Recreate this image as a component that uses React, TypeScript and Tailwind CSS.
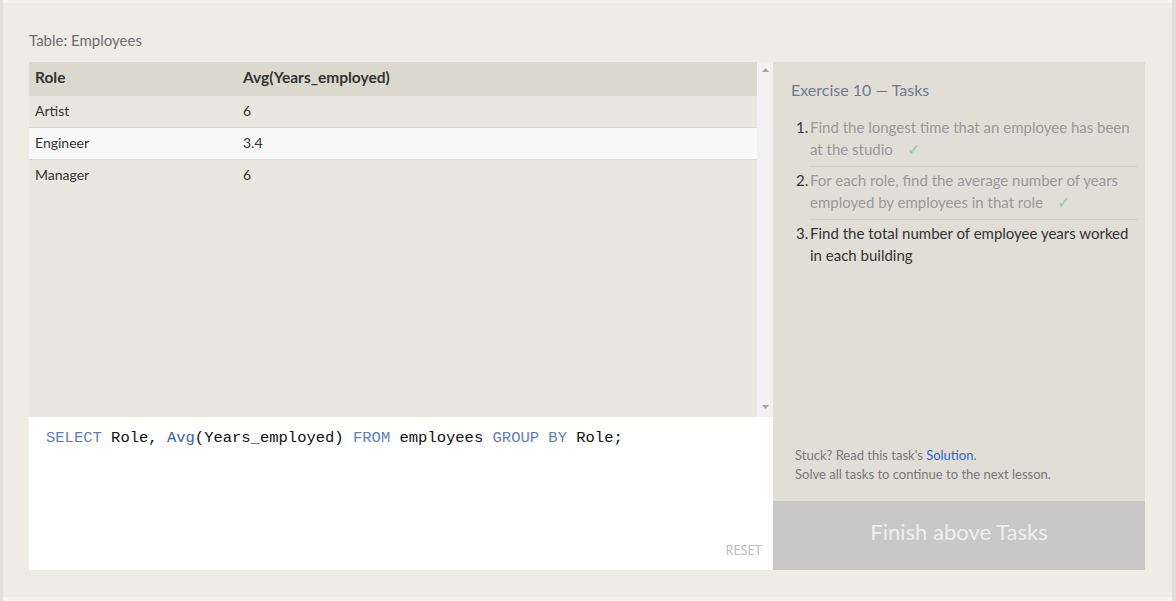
import React from "react";

const Check = () => <span className="ml-[14px] text-[16px] text-[#8fd19e]">✓</span>;

export default function App() {
  return (
    <div className="w-[1176px] h-[601px] bg-[#f6f4ef] flex font-['Lato','Noto_Sans',sans-serif]">
      <div className="w-[3px] h-full bg-[#e2dfdb]" />
      <div className="flex-1 flex flex-col">
        <div className="h-[3px]" />
        <div className="h-[594px] bg-[#efece5] px-[26px] pt-[28px] flex flex-col">
          <div className="text-[15px] leading-[18px] text-[#6e6e6e] mb-[13px]">Table: Employees</div>
          <div className="flex h-[508px]">
            <div className="w-[744px] flex flex-col">
              <div className="h-[355px] flex bg-[#e9e7e0]">
                <div className="flex-1 text-[14px] text-[#333]">
                  <div className="flex h-[34px] items-start pt-[5px] bg-[#dbd9ce] font-bold text-[15.5px] leading-[20px]">
                    <div className="w-[208px] pl-[6px]">Role</div>
                    <div className="pl-[6px]">Avg(Years_employed)</div>
                  </div>
                  <div className="flex h-[32px] items-start pt-[5px] leading-[20px] border-b border-[#dcdbd3]">
                    <div className="w-[208px] pl-[6px]">Artist</div>
                    <div className="pl-[6px]">6</div>
                  </div>
                  <div className="flex h-[32px] items-start pt-[5px] leading-[20px] bg-[#f9f9f9] border-b border-[#dcdbd3]">
                    <div className="w-[208px] pl-[6px]">Engineer</div>
                    <div className="pl-[6px]">3.4</div>
                  </div>
                  <div className="flex h-[31px] items-start pt-[5px] leading-[20px]">
                    <div className="w-[208px] pl-[6px]">Manager</div>
                    <div className="pl-[6px]">6</div>
                  </div>
                </div>
                <div className="w-[16px] bg-[#f1f1f1] flex flex-col items-center justify-between pt-[6px] pb-[8px]">
                  <svg width="7" height="4" viewBox="0 0 7 4"><path d="M3.5 0L7 4H0z" fill="#a3a3a3" /></svg>
                  <svg width="7" height="4" viewBox="0 0 7 4"><path d="M0 0H7L3.5 4z" fill="#a3a3a3" /></svg>
                </div>
              </div>
              <div className="flex-1 bg-white flex flex-col pl-[17px] pr-[11px] pt-[11px] pb-[9px]">
                <div className="font-['Liberation_Mono',monospace] text-[15.5px] leading-[20px] whitespace-pre text-[#111]">
                  <span className="text-[#5b7ec2]">SELECT</span> Role, <span className="text-[#3f5ea8]">Avg</span>(Years_employed) <span className="text-[#5b7ec2]">FROM</span> employees <span className="text-[#5b7ec2]">GROUP BY</span> Role;
                </div>
                <div className="mt-auto self-end text-[12.5px] text-[#bdbdbd]">RESET</div>
              </div>
            </div>
            <div className="w-[372px] flex flex-col">
              <div className="h-[439px] bg-[#e1dfd5] pl-[18px] pr-[7px] pt-[18px] flex flex-col">
                <div className="text-[16px] leading-[20px] text-[#6e7891]">Exercise 10 — Tasks</div>
                <ol className="mt-[16px] text-[15px] leading-[22px]">
                  <li className="flex">
                    <span className="w-[19px] pl-[5px] text-[#333] shrink-0">1.</span>
                    <div className="flex-1 text-[#999] pb-[6px] border-b border-[#d4d2c8]">Find the longest time that an employee has been at the studio<Check /></div>
                  </li>
                  <li className="flex mt-[2px]">
                    <span className="w-[19px] pl-[5px] text-[#333] shrink-0">2.</span>
                    <div className="flex-1 text-[#999] pb-[6px] border-b border-[#d4d2c8]">For each role, find the average number of years employed by employees in that role<Check /></div>
                  </li>
                  <li className="flex mt-[2px]">
                    <span className="w-[19px] pl-[5px] text-[#333] shrink-0">3.</span>
                    <div className="flex-1 text-[#333]">Find the total number of employee years worked in each building</div>
                  </li>
                </ol>
                <div className="mt-auto mb-[17px] pl-[4px] text-[13px] leading-[19px] text-[#777]">
                  <div>Stuck? Read this task's <span className="text-[#2a62d8]">Solution</span>.</div>
                  <div>Solve all tasks to continue to the next lesson.</div>
                </div>
              </div>
              <div className="flex-1 bg-[#c8c8c8] flex items-center justify-center pb-[8px] text-[22px] text-[#efefef]">Finish above Tasks</div>
            </div>
          </div>
        </div>
        <div className="flex-1" />
      </div>
      <div className="w-[4px] h-full bg-[#e2dfdb]" />
    </div>
  );
}
